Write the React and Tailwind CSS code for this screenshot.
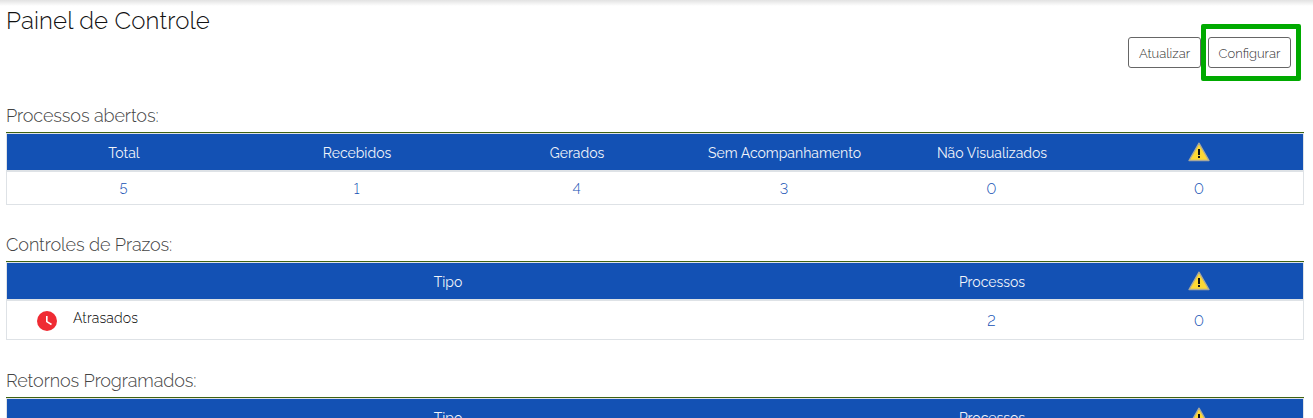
function WarningIcon() {
  return (
    <svg className="block h-5 w-[22px]" viewBox="0 0 22 20" aria-hidden="true">
      <path d="M11 1.2 21 18.5H1Z" fill="#fdd835" stroke="#aaa99b" strokeWidth="1.3" strokeLinejoin="round" />
      <path d="M10 7h2v6h-2zM10 14h2v2h-2z" fill="#111" />
    </svg>
  );
}

function ClockIcon() {
  return (
    <svg className="mt-0.5 block h-5 w-5" viewBox="0 0 20 20" aria-hidden="true">
      <circle cx="10" cy="10" r="10" fill="#ef2b33" />
      <path d="M9.8 5v5.6l4.7 2.9" fill="none" stroke="#fff" strokeWidth="1.6" />
    </svg>
  );
}

const SIX = "grid grid-cols-[233fr_233fr_207fr_208fr_207fr_208fr]";
const THREE = "grid grid-cols-[881fr_207fr_208fr]";

function Header({ cols, children }) {
  return (
    <div className={`${cols} h-[38px] items-center justify-items-center border-b-2 border-[#dee2e6] bg-[#1351b4] text-[14px] leading-5 font-normal text-[#f1f4fa]`}>
      {children}
      <WarningIcon />
    </div>
  );
}

function Label({ children }) {
  return <span className="pt-0.5 pl-px">{children}</span>;
}

function Section({ title, className, children }) {
  return (
    <section className={className}>
      <h2 className="h-[27px] text-[18px] leading-[22px] font-light tracking-[-0.1px] text-[#444]">{title}</h2>
      <div className="border-t border-[#3f6212]">
        <div className="border border-[#dee2e6]">{children}</div>
      </div>
    </section>
  );
}

function Num({ children }) {
  return <a className="pt-0.5 text-[14.5px] leading-5 font-light lining-nums text-[#1351b4]">{children}</a>;
}

export default function App() {
  return (
    <main className="h-[418px] overflow-hidden bg-white font-['Raleway','Lato',sans-serif]">
      <div className="h-1.5 bg-linear-to-b from-[#e2e2e2] to-white" />
      <div className="flex h-[99px] justify-between pl-1.5 pr-3">
        <h1 className="text-[24px] leading-[30px] font-light tracking-[0.15px] text-[#111]">Painel de Controle</h1>
        <div className="mt-[18px] flex h-[57px]">
          <button className="mt-[13px] h-[31px] w-[73px] rounded-[3px] border border-[#666] pt-0.5 text-[13px] font-light text-[#333]">Atualizar</button>
          <div className="h-[57px] w-[100px] rounded-[2px] border-5 border-[#00aa00] pt-2 pl-0.5">
            <button className="block h-[31px] w-[83px] rounded-[3px] border border-[#666] pt-0.5 text-[13px] font-light text-[#333]">Configurar</button>
          </div>
        </div>
      </div>
      <div className="pl-1.5 pr-[9px]">
        <Section title="Processos abertos:">
          <Header cols={SIX}>
            <Label>Total</Label>
            <Label>Recebidos</Label>
            <Label>Gerados</Label>
            <Label>Sem Acompanhamento</Label>
            <Label>Não Visualizados</Label>
          </Header>
          <div className={`${SIX} h-8 items-center justify-items-center`}>
            <Num>5</Num><Num>1</Num><Num>4</Num><Num>3</Num><Num>0</Num><Num>0</Num>
          </div>
        </Section>
        <Section title="Controles de Prazos:" className="mt-[29px]">
          <Header cols={THREE}>
            <Label>Tipo</Label>
            <Label>Processos</Label>
          </Header>
          <div className={`${THREE} h-[38px] items-center justify-items-center`}>
            <div className="flex w-full items-center gap-4 pl-[30px]">
              <ClockIcon />
              <span className="pb-1 text-[14px] leading-5 font-light tracking-[0.15px] text-black">Atrasados</span>
            </div>
            <Num>2</Num><Num>0</Num>
          </div>
        </Section>
        <Section title="Retornos Programados:" className="mt-[30px]">
          <Header cols={THREE}>
            <Label>Tipo</Label>
            <Label>Processos</Label>
          </Header>
        </Section>
      </div>
    </main>
  );
}
